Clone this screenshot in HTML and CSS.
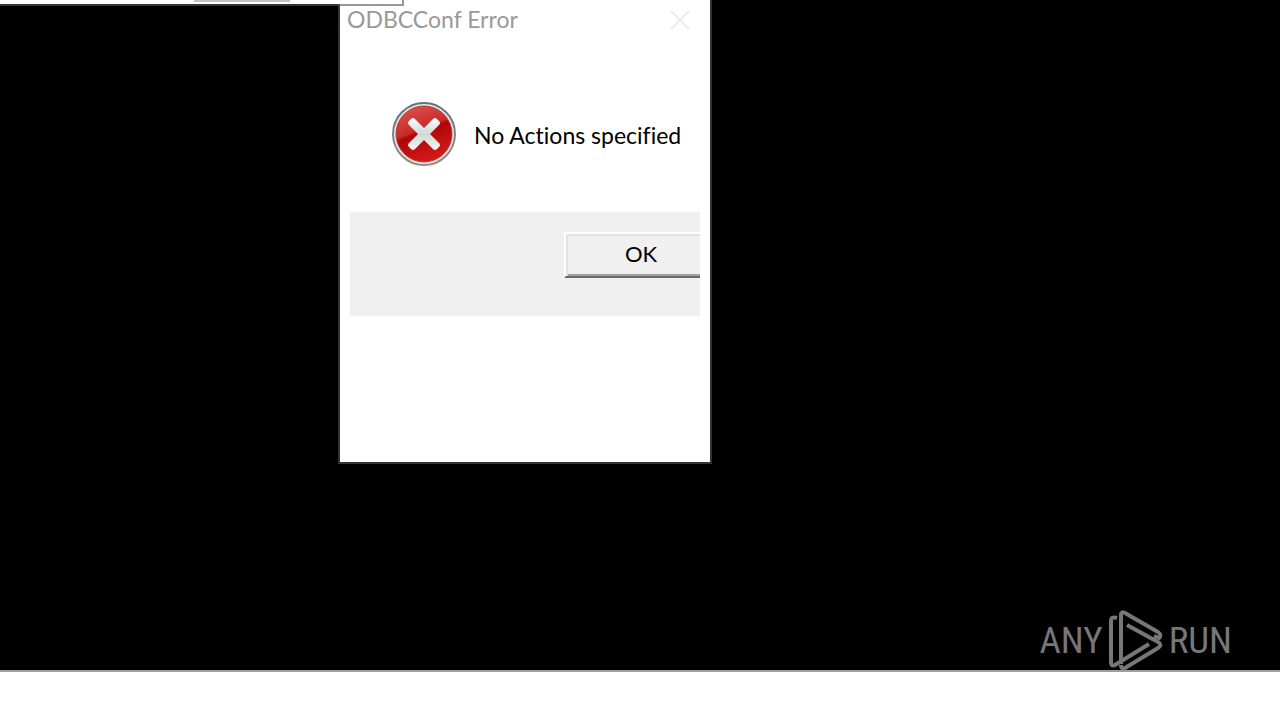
FILE: index.html
```html
<!DOCTYPE html>
<html lang="en">

<head>
    <meta charset="UTF-8">
    <meta name="viewport" content="width=device-width, initial-scale=1.0">
    <title>ODBCConf Error</title>
    <link rel="stylesheet" href="styles.css">
</head>

<body>

    <main class="desktop">
        <section class="dialog" role="alertdialog" aria-labelledby="dialog-title" aria-describedby="dialog-message">
            <header class="title-bar">
                <h1 id="dialog-title">ODBCConf Error</h1>
                <button class="close" type="button" aria-label="Close">
                    <svg width="20" height="20" viewBox="0 0 20 20">
                        <path d="M1 1L19 19M19 1L1 19" fill="none" stroke="#ececec" stroke-width="2" />
                    </svg>
                </button>
            </header>

            <div class="message">
                <svg class="error-icon" width="64" height="64" viewBox="0 0 64 64" aria-hidden="true">
                    <defs>
                        <linearGradient id="rim" x1="0" y1="0" x2="0" y2="1">
                            <stop offset="0" stop-color="#68747a" />
                            <stop offset="1" stop-color="#9b8888" />
                        </linearGradient>
                        <linearGradient id="red" x1="0" y1="0" x2="0.4" y2="1">
                            <stop offset="0" stop-color="#dc5a52" />
                            <stop offset="0.5" stop-color="#c92c2a" />
                            <stop offset="0.56" stop-color="#b00505" />
                            <stop offset="1" stop-color="#d01818" />
                        </linearGradient>
                        <linearGradient id="cross" gradientUnits="userSpaceOnUse" x1="0" y1="15" x2="0" y2="49">
                            <stop offset="0" stop-color="#ffffff" />
                            <stop offset="0.5" stop-color="#cfd8d8" />
                            <stop offset="1" stop-color="#f8f8f8" />
                        </linearGradient>
                    </defs>
                    <circle cx="32" cy="32" r="31" fill="#e6e9ea" stroke="url(#rim)" stroke-width="2" />
                    <circle cx="32" cy="32" r="28" fill="url(#red)" stroke="#b53a3a" stroke-width="1" />
                    <path d="M17 23Q15 21 17 19L19 17Q21 15 23 17L32 26L41 17Q43 15 45 17L47 19Q49 21 47 23L38 32L47 41Q49 43 47 45L45 47Q43 49 41 47L32 38L23 47Q21 49 19 47L17 45Q15 43 17 41L26 32Z" fill="url(#cross)" />
                </svg>
                <p id="dialog-message">No Actions specified</p>
            </div>

            <footer class="actions">
                <button class="ok" type="button">OK</button>
            </footer>
        </section>

        <div class="back-window">
            <div class="back-thumb"></div>
        </div>

        <div class="watermark">
            <span>ANY</span>
            <svg width="56" height="62" viewBox="0 0 56 62" aria-hidden="true">
                <g fill="none" stroke="#777777" stroke-width="4" stroke-linejoin="round">
                    <path d="M9 8Q3 6 3 11V52Q3 57 7 55L41 34" />
                    <path d="M13 54V5Q13 1 17 3L50 22Q54 25 51 28L46 26" />
                    <path d="M19 15L50 32Q55 35 50 38L17 58Q13 60 13 55" />
                </g>
            </svg>
            <span>RUN</span>
        </div>
    </main>

    <div class="taskbar"></div>

</body>

</html>
```

FILE: styles.css
```css
* {
    box-sizing: border-box;
}

body {
    margin: 0;
    min-height: 100vh;
    display: flex;
    flex-direction: column;
    background: #000;
    font-family: Lato, sans-serif;
    font-variant-ligatures: none;
}

.desktop {
    position: relative;
    flex: 1;
}

.taskbar {
    height: 50px;
    background: #fff;
    border-top: 2px solid #a0a0a0;
}

/* windows */
.dialog {
    position: absolute;
    top: 0;
    left: 338px;
    width: 374px;
    padding-bottom: 146px;
    background: #fff;
    border: 2px solid #333;
    border-top: none;
}

.back-window {
    position: absolute;
    top: 0;
    left: 0;
    width: 404px;
    height: 6px;
    padding-left: 194px;
    background: #fff;
    background-clip: padding-box;
    border: 2px solid rgba(85, 85, 85, 0.6);
    border-width: 0 2px 2px 0;
}

.back-thumb {
    width: 96px;
    height: 2px;
    background: #c4c4c4;
}

.title-bar {
    height: 40px;
    padding: 0 20px 0 7px;
    display: flex;
    align-items: center;
    justify-content: space-between;
}

.title-bar h1 {
    margin: 0;
    padding-bottom: 2px;
    font-size: 23px;
    line-height: 38px;
    font-weight: 400;
    color: #999;
}

.close {
    display: flex;
    padding: 0;
    border: none;
    background: none;
}

.message {
    height: 172px;
    padding: 62px 0 0 52px;
    display: flex;
    align-items: flex-start;
    gap: 18px;
}

.message p {
    margin: 0;
    font-size: 23px;
    line-height: 66px;
    white-space: nowrap;
    color: #000;
}

.error-icon {
    flex: none;
}

.actions {
    height: 104px;
    margin: 0 10px;
    padding-top: 20px;
    display: flex;
    justify-content: flex-end;
    background: #f0f0f0;
}

.ok {
    width: 136px;
    height: 46px;
    padding: 0 0 4px 16px;
    border: 2px solid #fff;
    border-right: none;
    border-bottom-color: #696969;
    background: #f0f0f0;
    box-shadow: inset 2px 2px #e3e3e3, inset 0 -2px #a0a0a0;
    font-family: inherit;
    font-size: 22px;
    color: #000;
}

.watermark {
    position: absolute;
    right: 48px;
    bottom: -2px;
    z-index: 1;
    display: flex;
    align-items: center;
    gap: 5px;
    font-family: "Roboto Condensed", "Liberation Sans Narrow", sans-serif;
    font-size: 37px;
    line-height: 62px;
    color: #777;
}
```
